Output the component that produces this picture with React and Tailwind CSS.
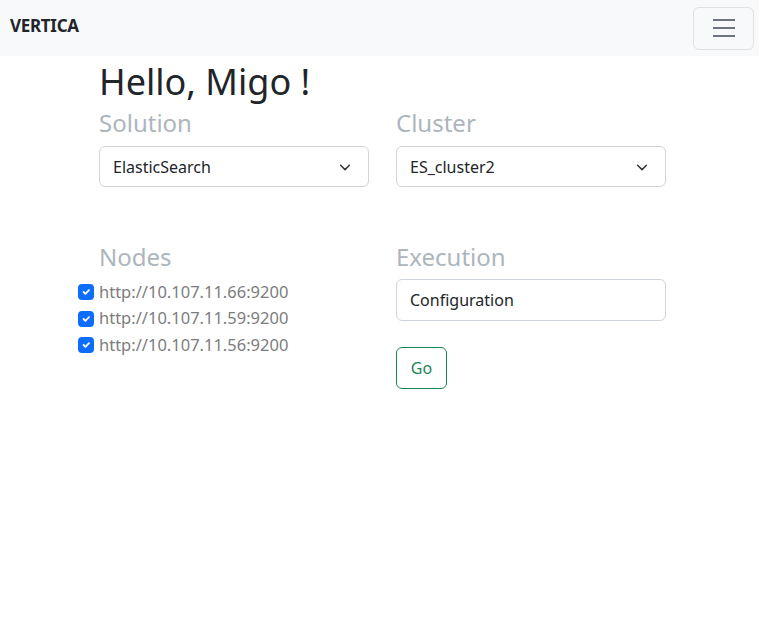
import React from 'react';

const font = { fontFamily: '"Noto Sans", "Open Sans", sans-serif' };

const Chevron = () => (
  <svg width="14" height="14" viewBox="0 0 16 16" fill="none" stroke="#343a40" strokeWidth="1.8" strokeLinecap="round" strokeLinejoin="round">
    <path d="M3 6l5 5 5-5" />
  </svg>
);

const Select = ({ value }) => (
  <div className="flex items-center justify-between h-[41px] w-[270px] border border-[#ced4da] rounded-md pl-[13px] pr-[16px] text-[16px] text-[#212529]">
    <span>{value}</span>
    <Chevron />
  </div>
);

const Check = () => (
  <span className="flex items-center justify-center w-4 h-4 rounded bg-[#0d6efd]">
    <svg width="12" height="12" viewBox="0 0 20 20" fill="none" stroke="#fff" strokeWidth="3" strokeLinecap="round" strokeLinejoin="round">
      <path d="M6 10l3 3 6-6" />
    </svg>
  </span>
);

const nodes = ['http://10.107.11.66:9200', 'http://10.107.11.59:9200', 'http://10.107.11.56:9200'];

export default function App() {
  return (
    <div className="min-h-screen bg-white" style={font}>
      <nav className="flex items-center justify-between h-14 bg-[#f8f9fa] pl-[10px] pr-[5px]">
        <span className="text-[17px] font-bold text-[#212529] tracking-[-0.3px] -mt-[4px]">VERTICA</span>
        <button className="flex items-center justify-center w-[61px] h-[43px] border border-[#dee2e6] rounded-md">
          <svg width="30" height="30" viewBox="0 0 30 30" stroke="#6c757d" strokeWidth="2">
            <path d="M4 7h22M4 15h22M4 23h22" />
          </svg>
        </button>
      </nav>

      <div className="pl-[99px]">
        <h1 className="text-[36px] leading-[48px] text-[#212529] mt-[2px]">Hello, Migo !</h1>
        <div className="flex gap-[27px]">
          <div className="w-[270px]">
            <h4 className="text-[24px] leading-[34px] text-[#adb5bd]">Solution</h4>
            <div className="mt-[6px]"><Select value="ElasticSearch" /></div>
          </div>
          <div className="w-[270px]">
            <h4 className="text-[24px] leading-[34px] text-[#adb5bd]">Cluster</h4>
            <div className="mt-[6px]"><Select value="ES_cluster2" /></div>
          </div>
        </div>

        <div className="flex gap-[27px] mt-[53px]">
          <div className="w-[270px]">
            <h4 className="text-[24px] leading-[34px] text-[#adb5bd]">Nodes</h4>
            <div className="mt-[5px] -ml-[21px]">
              {nodes.map((n) => (
                <div key={n} className="flex items-center gap-[5px] h-[26.5px]">
                  <Check />
                  <span className="text-[16.5px] text-[#7d7d7d]">{n}</span>
                </div>
              ))}
            </div>
          </div>
          <div className="w-[270px]">
            <h4 className="text-[24px] leading-[34px] text-[#adb5bd]">Execution</h4>
            <div className="mt-[5px] flex items-center h-[42px] w-[270px] border border-[#ced4da] rounded-md pl-[13px] text-[16px] text-[#212529]">
              Configuration
            </div>
            <button className="mt-[26px] h-[42px] w-[51px] border border-[#198754] rounded-md text-[16px] text-[#198754]">
              Go
            </button>
          </div>
        </div>
      </div>
    </div>
  );
}
